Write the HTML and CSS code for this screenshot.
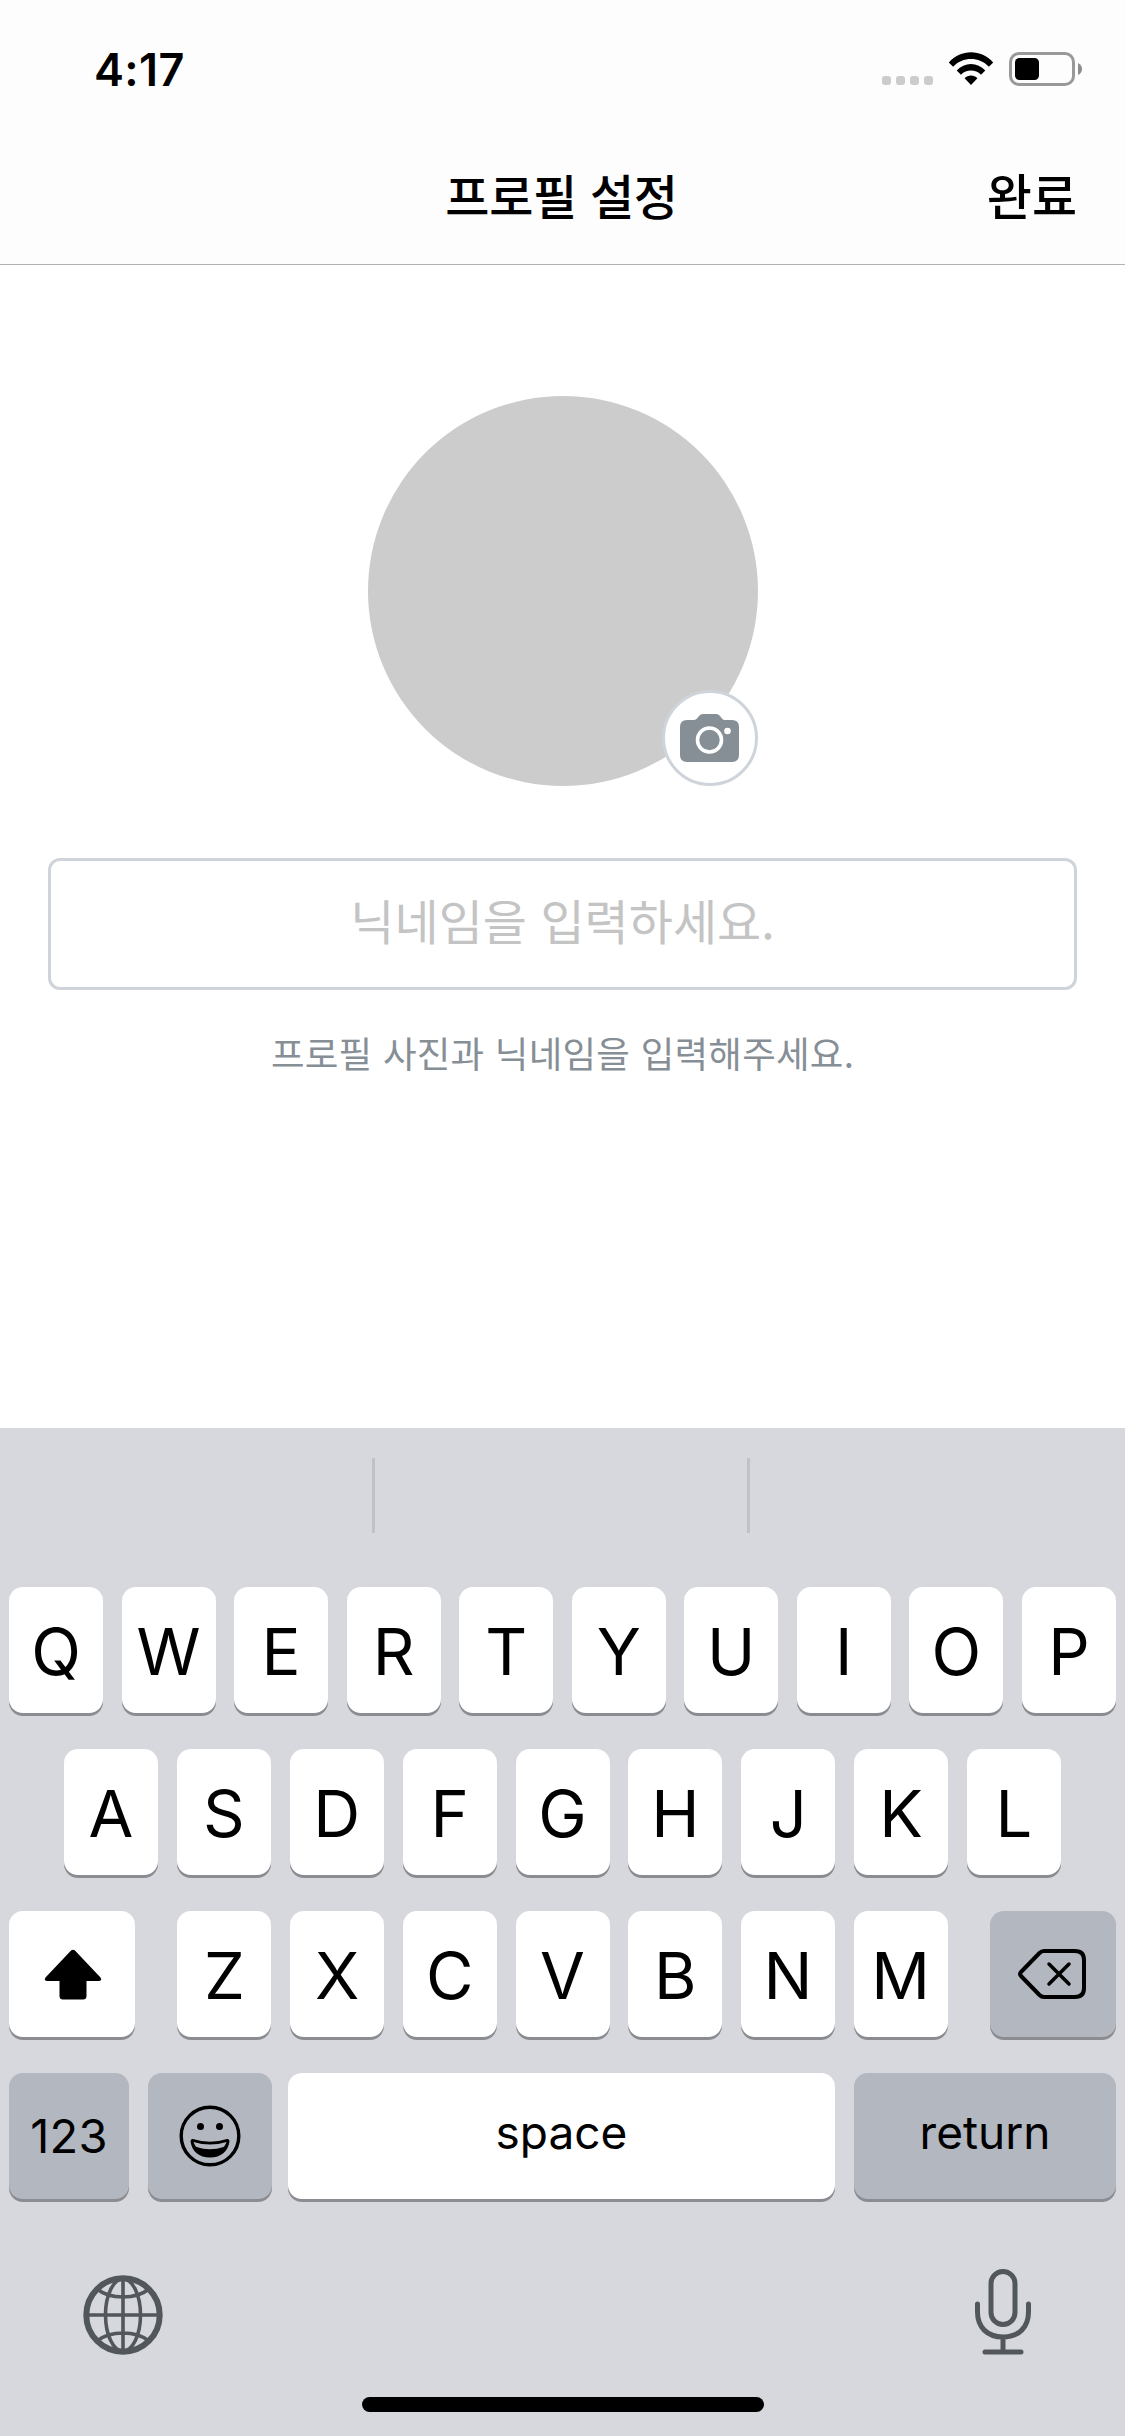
FILE: index.html
```html
<!DOCTYPE html>
<html lang="ko">
<head>
<meta charset="utf-8">
<title>프로필 설정</title>
<link rel="stylesheet" href="styles.css">
</head>
<body>
<div class="screen">
  <header class="top">
    <div class="status">
      <span class="time">4:17</span>
      <div class="indicators">
        <div class="dots"><i></i><i></i><i></i><i></i></div>
        <svg class="wifi" width="46" height="34" viewBox="0 0 46 34">
          <path d="M.8 10.4C12.8-3 33.200-3 45.200 10.400L40.900 14.700C31.200 4.400 14.800 4.400 5.100 14.700Z"/>
          <path d="M8.700 18.500C16.400 9.800 29.600 9.800 37.300 18.500L33 22.800C27.700 17.200 18.300 17.200 13 22.800Z"/>
          <path d="M16.600 26.300C20 22.500 26 22.500 29.400 26.300L23 33Z"/>
        </svg>
        <svg class="battery" width="74" height="34" viewBox="0 0 74 34">
          <rect x="1.500" y="1.500" width="63" height="31" rx="8.500" fill="none" stroke="#999" stroke-width="3"/>
          <rect x="6" y="6" width="24" height="22" rx="4.500"/>
          <path d="M69 11Q73 13 73 17T69 23Z" fill="#8c8c8c"/>
        </svg>
      </div>
    </div>
    <div class="navbar">
      <h1 class="title">프로필 설정</h1>
      <a class="done">완료</a>
    </div>
  </header>

  <main class="content">
    <div class="avatar">
      <div class="camera">
        <svg width="60" height="48" viewBox="0 0 60 48">
          <path fill="#868e96" d="M7 6H14Q16 6 17.500 4L19 2Q20.500 0 23 0H36Q38.500 0 40 2L42 4.500Q43 6 45 6H52Q59 6 59 13V41Q59 48 52 48H7Q0 48 0 41V13Q0 6 7 6Z"/>
          <circle cx="29.500" cy="26" r="12" fill="none" stroke="#fff" stroke-width="3.600"/>
          <circle cx="47.500" cy="17" r="3.300" fill="#fff"/>
        </svg>
      </div>
    </div>
    <input class="nickname" type="text" placeholder="닉네임을 입력하세요.">
    <p class="hint">프로필 사진과 닉네임을 입력해주세요.</p>
  </main>

  <section class="keyboard">
    <div class="suggestions"><span></span><span></span><span></span></div>
    <div class="keys">
      <div class="row">
        <b class="key">Q</b><b class="key">W</b><b class="key">E</b><b class="key">R</b><b class="key">T</b><b class="key">Y</b><b class="key">U</b><b class="key">I</b><b class="key">O</b><b class="key">P</b>
      </div>
      <div class="row middle">
        <b class="key">A</b><b class="key">S</b><b class="key">D</b><b class="key">F</b><b class="key">G</b><b class="key">H</b><b class="key">J</b><b class="key">K</b><b class="key">L</b>
      </div>
      <div class="row">
        <b class="key wide">
          <svg width="58" height="51" viewBox="0 0 58 51"><path d="M27.300 1.300Q29 0 30.700 1.300L56.500 28.500Q58.500 32 55 32H42.500V47Q42.500 50.500 39 50.500H19Q15.500 50.500 15.500 47V32H3Q-.5 32 1.500 28.500Z"/></svg>
        </b>
        <div class="group">
          <b class="key">Z</b><b class="key">X</b><b class="key">C</b><b class="key">V</b><b class="key">B</b><b class="key">N</b><b class="key">M</b>
        </div>
        <b class="key wide dark">
          <svg class="stroke" width="70" height="52" viewBox="0 0 70 52" stroke-width="4">
            <path d="M27 3H58Q67 3 67 12V40Q67 49 58 49H27Q24.500 49 22.500 47L4 28Q2 26 4 24L22.500 5Q24.500 3 27 3Z"/>
            <path d="M32 16L52 36M52 16L32 36" stroke-width="3.500"/>
          </svg>
        </b>
      </div>
      <div class="row bottom">
        <b class="key dark numbers">123</b>
        <b class="key dark emoji">
          <svg width="62" height="62" viewBox="0 0 62 62">
            <circle cx="31" cy="31" r="28.800" fill="none" stroke="#000" stroke-width="3.400"/>
            <circle cx="21.500" cy="21.500" r="3.500"/><circle cx="40.500" cy="21.500" r="3.500"/>
            <path d="M14 34Q31 39.500 48 34Q50.500 33.500 50.500 36.500C49 46.500 42 52.500 31 52.500S13 46.500 11.500 36.500Q11.500 33.500 14 34Z"/>
            <path d="M14.500 37Q31 42 47.500 37C46.500 39.500 45.800 41 44.500 42Q31 46.500 17.500 42C16.200 41 15.500 39.500 14.500 37Z" fill="#b3b7c0"/>
          </svg>
        </b>
        <b class="key space">space</b>
        <b class="key dark return">return</b>
      </div>
    </div>
    <div class="dock">
      <svg class="globe" width="80" height="80" viewBox="0 0 80 80">
        <circle cx="40" cy="40" r="36.700" stroke-width="6"/>
        <path d="M40 4V76M4 40H76M14 14Q24 22 40 22T66 14M14 66Q24 58 40 58T66 66" stroke-width="3.600"/>
        <ellipse cx="40" cy="40" rx="17.500" ry="36" stroke-width="3.600"/>
      </svg>
      <svg class="mic" width="56" height="86" viewBox="0 0 56 86">
        <rect x="16" y="2.500" width="24" height="53" rx="12"/>
        <path d="M2.500 35V43C2.500 58 12 68 28 68S53.500 58 53.500 43V35M28 68V83M10 83H46"/>
      </svg>
    </div>
    <div class="home"></div>
  </section>
</div>
</body>
</html>
```
FILE: styles.css
```css
* { box-sizing: border-box; }

body {
  margin: 0;
  background: #fff;
  color: #000;
  font-family: Inter, "Noto Sans CJK KR", sans-serif;
}

.screen {
  width: 1125px;
  height: 2436px;
  display: flex;
  flex-direction: column;
  overflow: hidden;
}

/* Status and navigation bars */
.top {
  height: 265px;
  background: #fdfdfd;
  border-bottom: 1px solid #b2b2b2;
}

.status {
  height: 132px;
  padding: 6px 43px 0 94px;
  display: flex;
  justify-content: space-between;
  align-items: center;
}

.time {
  font-size: 45px;
  font-weight: 600;
  letter-spacing: 0.400px;
}

.indicators { display: flex; align-items: flex-end; }

.dots { display: flex; gap: 5px; padding-bottom: 1px; margin-right: 15px; }
.dots i { width: 9px; height: 9px; border-radius: 3px; background: #ccc; }

.wifi { margin-right: 15px; }
.battery { margin-right: -1px; }

.navbar {
  height: 132px;
  padding: 0 48px 8px;
  display: grid;
  grid-template-columns: 1fr auto 1fr;
  align-items: center;
  font-family: "Noto Sans CJK KR", sans-serif;
}

.title, .done { font-size: 48px; font-weight: 500; line-height: 70px; }
.title { margin: 0 2px 0 0; grid-column: 2; letter-spacing: -0.3px; }
.done { justify-self: end; font-size: 49px; }

/* Profile form */
.content {
  height: 1163px;
  padding: 131px 48px 0;
  display: flex;
  flex-direction: column;
  align-items: center;
  background: #fff;
}

.avatar {
  width: 390px;
  height: 390px;
  flex: none;
  border-radius: 50%;
  background: #ccc;
  display: flex;
  align-items: flex-end;
  justify-content: flex-end;
}

.camera {
  width: 96px;
  height: 96px;
  border: 3px solid #ced4da;
  border-radius: 50%;
  background: #fff;
  display: flex;
  align-items: center;
  justify-content: center;
}

.nickname {
  width: 100%;
  height: 132px;
  margin: 72px 0 0;
  padding: 0 0 11px;
  border: 3px solid #ced4da;
  border-radius: 12px;
  background: #fff;
  outline: 0;
  text-align: center;
  font: 400 48px "Noto Sans CJK KR", sans-serif;
}
.nickname::placeholder { color: #c4c4c4; opacity: 1; }

.hint {
  margin: 36px 0 0;
  color: #868e96;
  font: 400 36.500px/54px "Noto Sans CJK KR", sans-serif;
  letter-spacing: 0.250px;
}

/* Keyboard */
.keyboard {
  height: 1008px;
  background: #d6d8de;
  display: flex;
  flex-direction: column;
  align-items: center;
}

.suggestions {
  width: 100%;
  height: 159px;
  padding: 30px 0 54px;
  display: grid;
  grid-template-columns: 375px 375px 375px;
}
.suggestions span + span { border-left: 3px solid #c1c2c7; margin-left: -3px; }

.keys {
  width: 1107px;
  display: flex;
  flex-direction: column;
  gap: 36px;
}

.row { display: flex; justify-content: space-between; }
.middle { padding: 0 55px; }
.group { display: flex; gap: 18.700px; }

.key {
  width: 94px;
  height: 126px;
  padding-top: 3px;
  border-radius: 14px;
  background: #fff;
  box-shadow: 0 3px 0 #8b8c91;
  display: flex;
  align-items: center;
  justify-content: center;
  font-size: 65px;
  font-weight: 400;
}
.wide { width: 126px; padding: 0 0 0 1px; }
.wide.dark { padding: 0 2px 0 0; }
.dark { background: #b3b7c0; }

.stroke { fill: none; stroke: #000; stroke-linecap: round; stroke-linejoin: round; }

.numbers, .space, .return { font-size: 46px; }
.numbers { width: 120px; padding: 0 0 1px; font-size: 47px; letter-spacing: 0.300px; }
.emoji { width: 124px; padding: 0 1px 0 0; margin-left: 19px; }
.space { width: 547px; margin-left: 16px; padding: 0 0 8px; }
.return { width: 262px; margin-left: 19px; padding: 0 0 8px; }
.bottom { justify-content: flex-start; }

.dock {
  width: 100%;
  padding: 66px 94px 0 83px;
  display: flex;
  justify-content: space-between;
  align-items: flex-end;
  height: 156px;
}
.dock svg { fill: none; stroke: #52575c; }
.mic { stroke-width: 5; stroke-linecap: round; }

.home {
  width: 402px;
  height: 15px;
  margin-top: 42px;
  border-radius: 8px;
  background: #000;
}
```
